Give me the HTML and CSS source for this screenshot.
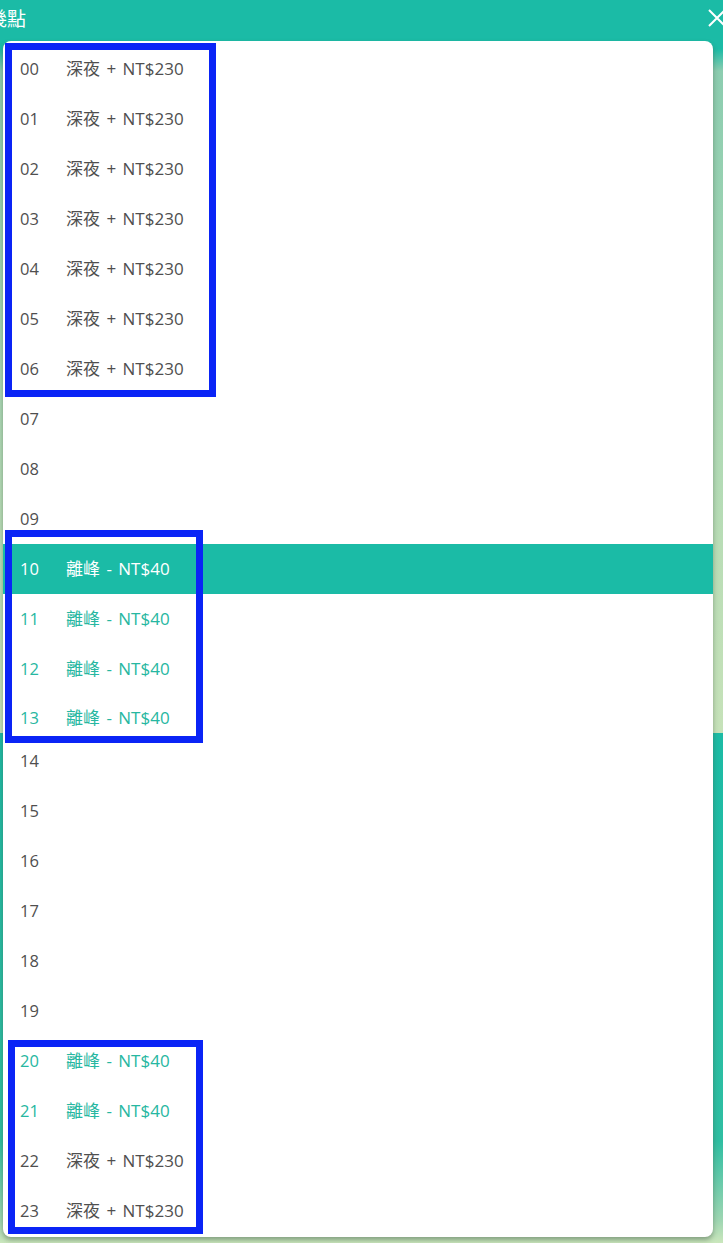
FILE: index.html
```html
<!DOCTYPE html>
<html lang="zh-Hant">
<head>
<meta charset="utf-8">
<title>幾點</title>
<link rel="stylesheet" href="styles.css">
</head>
<body>
<div class="page">
  <header class="topbar">
    <span class="title">幾點</span>
    <svg class="close" width="18" height="18" viewBox="0 0 18 18" aria-hidden="true">
      <path d="M1 1 L17 17 M17 1 L1 17" stroke="#fff" stroke-width="2" fill="none"/>
    </svg>
  </header>
  <div class="backdrop">
    <ul class="panel">
      <li class="row"><span class="hr">00</span><span class="lbl">深夜 + NT$230</span></li>
      <li class="row"><span class="hr">01</span><span class="lbl">深夜 + NT$230</span></li>
      <li class="row"><span class="hr">02</span><span class="lbl">深夜 + NT$230</span></li>
      <li class="row"><span class="hr">03</span><span class="lbl">深夜 + NT$230</span></li>
      <li class="row"><span class="hr">04</span><span class="lbl">深夜 + NT$230</span></li>
      <li class="row"><span class="hr">05</span><span class="lbl">深夜 + NT$230</span></li>
      <li class="row"><span class="hr">06</span><span class="lbl">深夜 + NT$230</span></li>
      <li class="row"><span class="hr">07</span></li>
      <li class="row"><span class="hr">08</span></li>
      <li class="row"><span class="hr">09</span></li>
      <li class="row active"><span class="hr">10</span><span class="lbl">離峰 - NT$40</span></li>
      <li class="row off"><span class="hr">11</span><span class="lbl">離峰 - NT$40</span></li>
      <li class="row off"><span class="hr">12</span><span class="lbl">離峰 - NT$40</span></li>
      <li class="row off cut"><span class="hr">13</span><span class="lbl">離峰 - NT$40</span></li>
      <li class="row"><span class="hr">14</span></li>
      <li class="row"><span class="hr">15</span></li>
      <li class="row"><span class="hr">16</span></li>
      <li class="row"><span class="hr">17</span></li>
      <li class="row"><span class="hr">18</span></li>
      <li class="row"><span class="hr">19</span></li>
      <li class="row off"><span class="hr">20</span><span class="lbl">離峰 - NT$40</span></li>
      <li class="row off"><span class="hr">21</span><span class="lbl">離峰 - NT$40</span></li>
      <li class="row"><span class="hr">22</span><span class="lbl">深夜 + NT$230</span></li>
      <li class="row"><span class="hr">23</span><span class="lbl">深夜 + NT$230</span></li>
    </ul>
  </div>
  <div class="mark mark-1"></div>
  <div class="mark mark-2"></div>
  <div class="mark mark-3"></div>
</div>
</body>
</html>
```

FILE: styles.css
```css
* { box-sizing: border-box; }
html, body { margin: 0; padding: 0; }
body {
  width: 723px;
  height: 1243px;
  overflow: hidden;
  font-family: "Open Sans", "Noto Sans CJK TC", sans-serif;
  background: #c9e6bd;
}
.page {
  position: relative;
  width: 723px;
  height: 1243px;
  overflow: hidden;
}
.topbar {
  height: 41px;
  background: #1bbba6;
  display: flex;
  align-items: center;
  justify-content: space-between;
  color: #fff;
}
.title {
  margin-left: -12px;
  margin-top: -6px;
  font-family: "Noto Sans CJK TC", sans-serif;
  font-size: 19px;
  line-height: 1;
}
.close {
  margin-right: -3px;
  margin-top: -6px;
}
.backdrop {
  height: 1202px;
  padding: 0 10px 6px 3px;
  background: linear-gradient(to bottom,
    #1bbba6 0px,
    #1bbba6 8px,
    #8ccdb0 30px,
    #b9ddb6 500px,
    #c6e2b9 692px,
    #1cbba5 692px,
    #2fbea2 1100px,
    #9fd6b2 1180px,
    #cbe7bd 1202px);
}
.panel {
  list-style: none;
  margin: 0;
  padding: 3px 0 0;
  height: 1196px;
  background: #fff;
  border-radius: 8px;
  box-shadow: 0 3px 5px rgba(60, 80, 60, 0.45);
  overflow: hidden;
}
.row {
  display: flex;
  align-items: center;
  height: 50px;
  padding-left: 17px;
  font-size: 17px;
  line-height: 24px;
  color: #4f4f4f;
}
.row.cut {
  height: 42px;
  align-items: flex-start;
  padding-top: 12px;
}
.hr { width: 46px; flex: none; font-size: 16.5px; }
.lbl { word-spacing: 2px; }
.row.off { color: #27b7a1; }
.row.active { background: #1bbba6; color: #fff; }
.mark {
  position: absolute;
  border: 7px solid #0a24f6;
}
.mark-1 { left: 5px; top: 43px; width: 211px; height: 354px; }
.mark-2 { left: 5px; top: 530px; width: 198px; height: 213px; }
.mark-3 { left: 8px; top: 1040px; width: 195px; height: 194px; }
```
